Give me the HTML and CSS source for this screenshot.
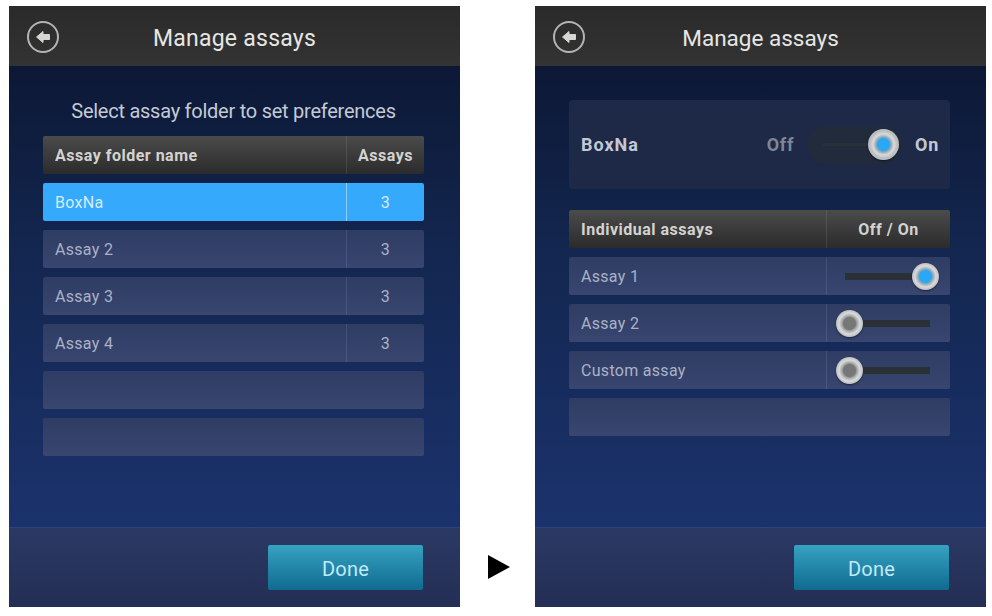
FILE: index.html
```html
<!DOCTYPE html>
<html lang="en">
<head>
  <meta charset="UTF-8" />
  <meta name="viewport" content="width=device-width, initial-scale=1.0" />
  <title>Manage assays</title>
  <link rel="stylesheet" href="styles.css">
</head>
<body>
  <!-- Folder list screen -->
  <section class="screen">
    <header class="top-bar">
      <svg class="back-icon" viewBox="0 0 34 34" aria-hidden="true">
        <circle cx="17" cy="17" r="15" fill="none" stroke="#b4b4b0" stroke-width="2"/>
        <path d="M10.5 17 L17 11.5 V14.5 H23.5 V19.5 H17 V22.5 Z" fill="#d6d6d2" stroke="#d6d6d2" stroke-width="1" stroke-linejoin="round"/>
      </svg>
      <h1 class="title-wide">Manage assays</h1>
    </header>
    <main class="content folder-content">
      <p class="prompt">Select assay folder to set preferences</p>
      <div class="table">
        <div class="row head folder-cols">
          <span class="cell name">Assay folder name</span>
          <span class="cell count">Assays</span>
        </div>
        <div class="row selected folder-cols">
          <span class="cell name">BoxNa</span>
          <span class="cell count">3</span>
        </div>
        <div class="row folder-cols">
          <span class="cell name">Assay 2</span>
          <span class="cell count">3</span>
        </div>
        <div class="row folder-cols">
          <span class="cell name">Assay 3</span>
          <span class="cell count">3</span>
        </div>
        <div class="row folder-cols">
          <span class="cell name">Assay 4</span>
          <span class="cell count">3</span>
        </div>
        <div class="row"></div>
        <div class="row"></div>
      </div>
    </main>
    <footer class="bottom-bar">
      <button class="done-button">Done</button>
    </footer>
  </section>

  <!-- Arrow between the two screens -->
  <div class="step-arrow"></div>

  <!-- Folder preferences screen -->
  <section class="screen">
    <header class="top-bar">
      <svg class="back-icon" viewBox="0 0 34 34" aria-hidden="true">
        <circle cx="17" cy="17" r="15" fill="none" stroke="#b4b4b0" stroke-width="2"/>
        <path d="M10.5 17 L17 11.5 V14.5 H23.5 V19.5 H17 V22.5 Z" fill="#d6d6d2" stroke="#d6d6d2" stroke-width="1" stroke-linejoin="round"/>
      </svg>
      <h1>Manage assays</h1>
    </header>
    <main class="content prefs-content">
      <div class="folder-card">
        <strong class="folder-name">BoxNa</strong>
        <span class="switch-label off">Off</span>
        <div class="switch-well">
          <div class="slider on">
            <span class="track"></span>
            <span class="knob"></span>
          </div>
        </div>
        <span class="switch-label">On</span>
      </div>
      <div class="table">
        <div class="row head assay-cols">
          <span class="cell name">Individual assays</span>
          <span class="cell count">Off / On</span>
        </div>
        <div class="row assay-cols">
          <span class="cell name">Assay 1</span>
          <div class="cell toggle">
            <div class="slider on">
              <span class="track"></span>
              <span class="knob"></span>
            </div>
          </div>
        </div>
        <div class="row assay-cols">
          <span class="cell name">Assay 2</span>
          <div class="cell toggle">
            <div class="slider">
              <span class="knob"></span>
              <span class="track"></span>
            </div>
          </div>
        </div>
        <div class="row assay-cols">
          <span class="cell name">Custom assay</span>
          <div class="cell toggle">
            <div class="slider">
              <span class="knob"></span>
              <span class="track"></span>
            </div>
          </div>
        </div>
        <div class="row"></div>
      </div>
    </main>
    <footer class="bottom-bar">
      <button class="done-button">Done</button>
    </footer>
  </section>
</body>
</html>
```
FILE: styles.css
```css
/* Reset and base styles */
* {
  margin: 0;
  padding: 0;
  box-sizing: border-box;
}
html, body {
  height: 100%;
  font-family: Roboto, "Liberation Sans", sans-serif;
}
body {
  background: #fff;
  display: flex;
  align-items: flex-start;
  padding: 6px 0 0 9px;
  overflow: hidden;
}
/* Device screen */
.screen {
  width: 451px;
  height: 601px;
  display: flex;
  flex-direction: column;
  background: linear-gradient(180deg, #0a132c 0%, #13264f 40%, #1d3675 100%);
}
.top-bar {
  height: 60px;
  flex: none;
  position: relative;
  display: flex;
  align-items: center;
  justify-content: center;
  background: linear-gradient(180deg, #2a2a2a, #333);
}
.top-bar h1 {
  font-size: 22.5px;
  font-weight: 400;
  color: #e6e6e4;
  padding-top: 4px;
}
.top-bar h1.title-wide {
  font-size: 23px;
  letter-spacing: 0.25px;
}
.back-icon {
  position: absolute;
  left: 17px;
  top: 14px;
  width: 34px;
  height: 34px;
}
.content {
  flex: 1;
  padding: 0 36px 0 34px;
}
.folder-content {
  padding-top: 33px;
}
.prefs-content {
  padding-top: 34px;
}
.prompt {
  font-size: 20px;
  letter-spacing: -0.25px;
  line-height: 24px;
  color: #c3cad6;
  text-align: center;
  margin-bottom: 13px;
}
/* Tables */
.table {
  display: flex;
  flex-direction: column;
  gap: 9px;
}
.row {
  height: 38px;
  display: grid;
  grid-template-columns: 1fr;
  background: linear-gradient(180deg, #2f3c63, #384670);
  border-radius: 2px;
  font-size: 16px;
  letter-spacing: 0.3px;
  color: #a9b2c6;
}
.folder-cols {
  grid-template-columns: 303px 78px;
}
.assay-cols {
  grid-template-columns: 257px 124px;
}
.row.head {
  background: linear-gradient(180deg, #4b4b4b, #2b2b2b);
  color: #d3d3d1;
  font-weight: 700;
  letter-spacing: 0.5px;
}
.row.selected {
  background: #35a9fb;
  color: #d3ecfd;
}
.cell {
  display: flex;
  align-items: center;
}
.cell.name {
  padding-left: 12px;
}
.cell.count, .cell.toggle {
  justify-content: center;
  border-left: 1px solid rgba(255, 255, 255, 0.1);
}
.row.selected .cell.count {
  border-left-color: rgba(255, 255, 255, 0.45);
}
/* Sliders */
.slider {
  display: flex;
  align-items: center;
  width: 94px;
}
.slider .track {
  flex: 1;
  height: 7px;
  background: #2a3136;
}
.slider .knob {
  flex: none;
  width: 27px;
  height: 27px;
  border-radius: 50%;
  background: radial-gradient(circle at 50% 50%, #777 0 6px, #a2a5a7 7.5px, #d8dadb 10.5px, #bcbfc1 13.5px);
  box-shadow: 0 1px 2px rgba(0, 0, 0, 0.5);
}
.slider.on .knob {
  background: radial-gradient(circle at 50% 50%, #29a9f5 0 6px, #98a6b0 7.5px, #d8dadb 10.5px, #bcbfc1 13.5px);
}
.toggle .slider {
  margin-left: -12px;
}
.toggle .slider.on {
  margin-left: 6px;
}
/* Summary card on the preferences screen */
.folder-card {
  height: 89px;
  display: flex;
  align-items: center;
  padding: 0 11px 0 12px;
  margin-bottom: 21px;
  background: #1d2947;
  border-radius: 4px;
  color: #c3c9d3;
}
.folder-name {
  flex: 1;
  font-size: 18px;
  letter-spacing: 1px;
}
.switch-label {
  font-size: 18px;
  font-weight: 700;
  letter-spacing: 0.7px;
}
.switch-label.off {
  color: #7e8796;
}
.switch-well {
  width: 95px;
  height: 38px;
  margin: 0 13px;
  display: flex;
  align-items: center;
  padding-left: 16px;
  background: #212b3b;
  border-radius: 19px;
}
.switch-well .slider {
  width: 76px;
}
.switch-well .track {
  height: 3px;
}
.switch-well .knob {
  width: 31px;
  height: 31px;
  background: radial-gradient(circle at 50% 50%, #29a9f5 0 7px, #98a6b0 8.5px, #d8dadb 12px, #bcbfc1 15.5px);
}
/* Footer */
.bottom-bar {
  height: 80px;
  flex: none;
  display: flex;
  justify-content: flex-end;
  align-items: flex-start;
  padding: 17px 37px 0 0;
  border-top: 1px solid #2f4377;
  background: linear-gradient(180deg, #2a3964, #242e54);
}
.done-button {
  width: 155px;
  height: 45px;
  padding-top: 2px;
  border: none;
  border-radius: 2px;
  background: linear-gradient(180deg, #36a2c2, #0f6b90);
  color: #c2e9f7;
  font-family: inherit;
  font-size: 20px;
  letter-spacing: 0.2px;
}
/* Step arrow */
.step-arrow {
  width: 0;
  height: 0;
  margin: 549px 25px 0 28px;
  border-left: 22px solid #000;
  border-top: 12.5px solid transparent;
  border-bottom: 12.5px solid transparent;
}
```
